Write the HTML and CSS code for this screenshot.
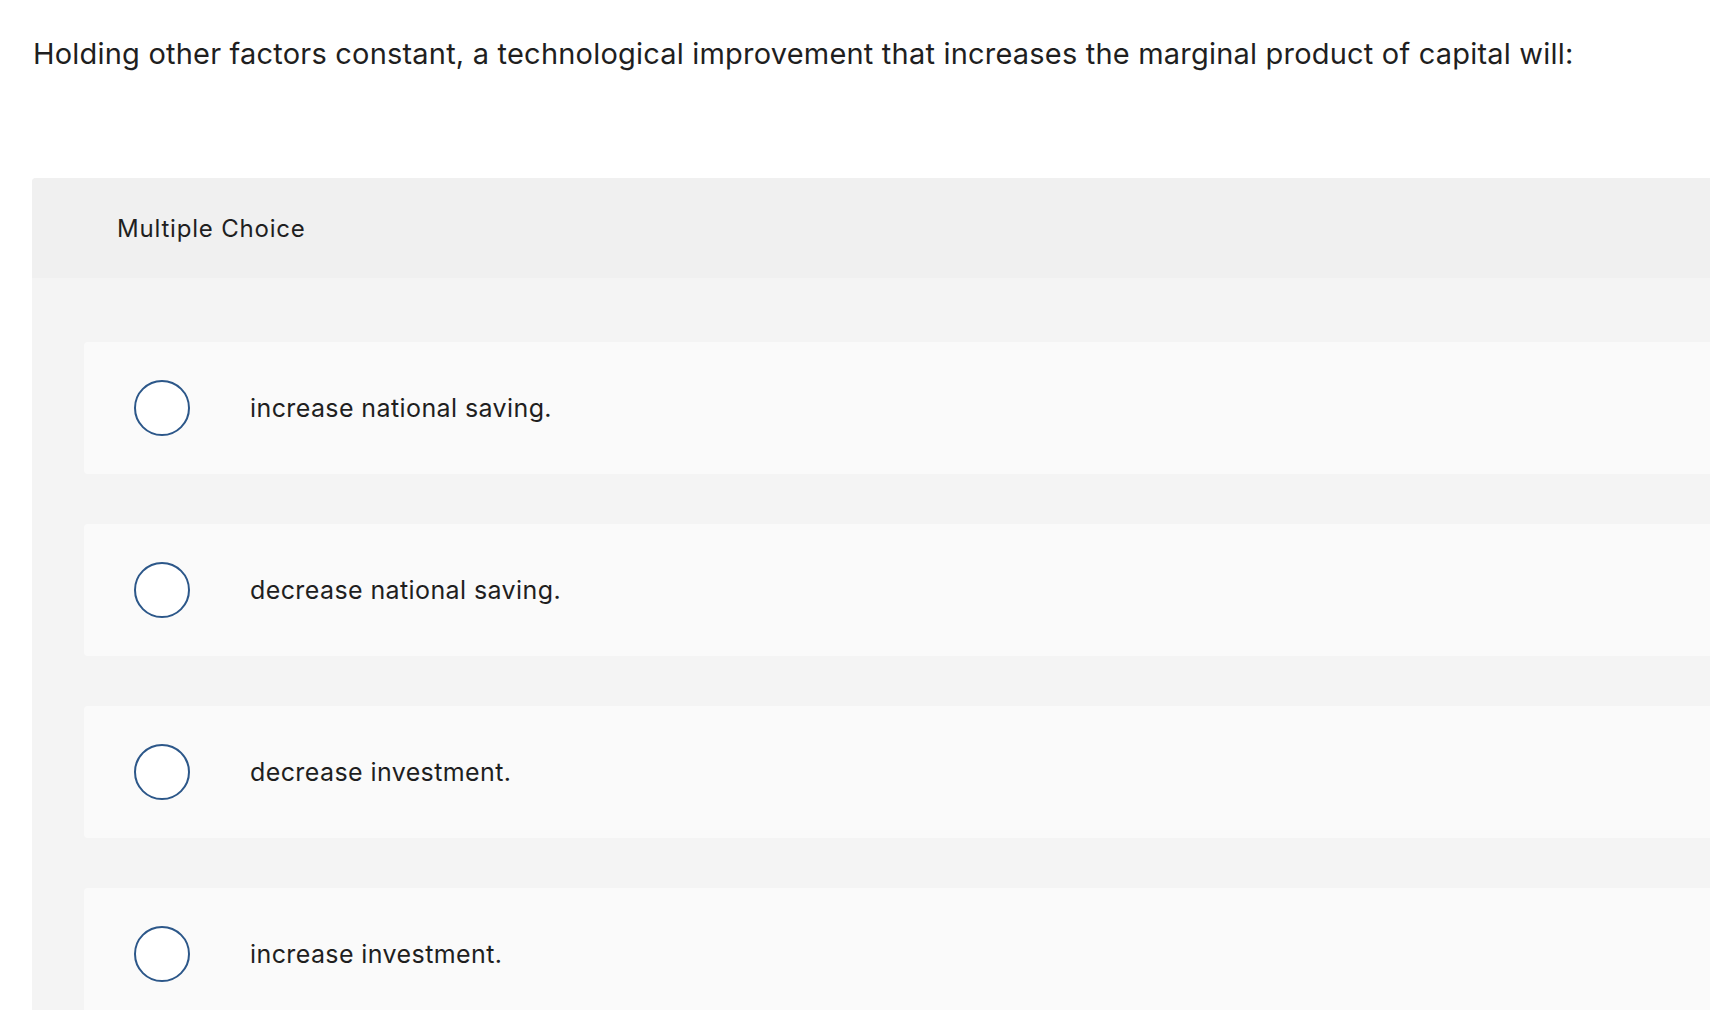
FILE: index.html
```html
<!DOCTYPE html>
<html lang="en">
<head>
<meta charset="utf-8">
<title>Multiple Choice</title>
<link rel="stylesheet" href="styles.css">
</head>
<body>
<p class="question">Holding other factors constant, a technological improvement that increases the marginal product of capital will:</p>
<section class="card">
  <div class="card-head">Multiple Choice</div>
  <div class="options">
    <label class="option"><span class="radio"></span><span class="opt-text">increase national saving.</span></label>
    <label class="option"><span class="radio"></span><span class="opt-text">decrease national saving.</span></label>
    <label class="option"><span class="radio"></span><span class="opt-text">decrease investment.</span></label>
    <label class="option"><span class="radio"></span><span class="opt-text">increase investment.</span></label>
  </div>
</section>
</body>
</html>
```
FILE: styles.css
```css
html, body {
  margin: 0;
  padding: 0;
  overflow: hidden;
  background: #ffffff;
}
body {
  font-family: Inter, "Noto Sans", sans-serif;
  color: #1f1f1f;
  width: 1710px;
  height: 1010px;
}
.question {
  margin: 0;
  padding: 34px 0 0 33px;
  font-size: 29px;
  line-height: 40px;
  letter-spacing: 0.2px;
  white-space: nowrap;
}
.card {
  margin: 104px 0 0 32px;
  width: 1760px;
  min-height: 900px;
  background: #f4f4f4;
  border-radius: 4px 4px 0 0;
}
.card-head {
  height: 100px;
  display: flex;
  align-items: center;
  padding-left: 85px;
  background: #f0f0f0;
  border-radius: 4px 4px 0 0;
  font-size: 24px;
  letter-spacing: 0.8px;
}
.options {
  display: flex;
  flex-direction: column;
  gap: 50px;
  padding: 64px 0 0 52px;
}
.option {
  height: 132px;
  display: flex;
  align-items: center;
  padding-left: 50px;
  background: #fafafa;
  border-radius: 4px;
}
.radio {
  width: 56px;
  height: 56px;
  box-sizing: border-box;
  border: 2px solid #2c5789;
  border-radius: 50%;
  background: #ffffff;
  flex: none;
}
.opt-text {
  margin-left: 60px;
  font-size: 25px;
  letter-spacing: 0.4px;
}
```
